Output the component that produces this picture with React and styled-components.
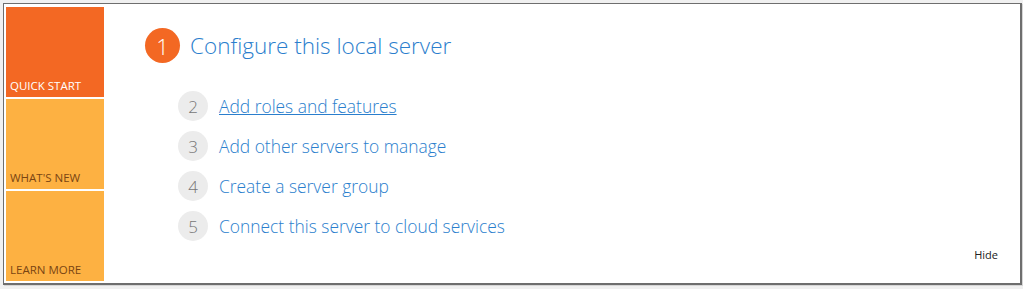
import React from 'react'
import styled, { createGlobalStyle } from 'styled-components'

const GlobalStyle = createGlobalStyle`
  body {
    margin: 0;
    background: #f0f0f0;
    font-family: "Open Sans", "Noto Sans", sans-serif;
  }
`

const steps = [
  { n: 2, label: 'Add roles and features', link: true },
  { n: 3, label: 'Add other servers to manage' },
  { n: 4, label: 'Create a server group' },
  { n: 5, label: 'Connect this server to cloud services' },
]

const tiles = [
  { label: 'QUICK START', active: true },
  { label: "WHAT'S NEW" },
  { label: 'LEARN MORE' },
]

export default function App() {
  return (
    <>
      <GlobalStyle />
      <Page>
        <Panel>
          <Sidebar>
            {tiles.map(t => (
              <Tile key={t.label} active={t.active}>{t.label}</Tile>
            ))}
          </Sidebar>
          <Main>
            <Heading>
              <StepBadge>1</StepBadge>
              <Title>Configure this local server</Title>
            </Heading>
            <Steps>
              {steps.map(s => (
                <Step key={s.n}>
                  <StepNum>{s.n}</StepNum>
                  <StepLink href="#" underline={s.link}>{s.label}</StepLink>
                </Step>
              ))}
            </Steps>
            <Footer>
              <HideBtn>Hide</HideBtn>
            </Footer>
          </Main>
        </Panel>
      </Page>
    </>
  )
}

const Page = styled.div`
  padding: 3px;
`

const Panel = styled.div`
  display: flex;
  height: 274px;
  width: 1012px;
  padding: 3px 2px 2px;
  background: #fff;
  border: 1px solid #6e6e6e;
  border-right-width: 2px;
  border-bottom-width: 2px;
  box-shadow: 1px 1px 0 #d6d6d6;
`

const Sidebar = styled.div`
  display: flex;
  flex-direction: column;
  gap: 2px;
  width: 98px;
  flex-shrink: 0;
`

const Tile = styled.div`
  flex: 1;
  display: flex;
  align-items: flex-end;
  padding: 0 0 4px 4px;
  font-size: 11.5px;
  background: ${p => (p.active ? '#f36823' : '#fdb142')};
  color: ${p => (p.active ? '#fff' : '#7a4513')};
`

const Main = styled.div`
  flex: 1;
  display: flex;
  flex-direction: column;
  padding: 21px 0 0 41px;
`

const Heading = styled.div`
  display: flex;
  align-items: center;
  gap: 10px;
`

const StepBadge = styled.div`
  width: 35px;
  height: 35px;
  border-radius: 50%;
  background: #f36823;
  color: #fff;
  display: flex;
  align-items: center;
  justify-content: center;
  font-size: 22px;
  font-weight: 300;
`

const Title = styled.h1`
  margin: 0;
  font-size: 22.5px;
  font-weight: 300;
  color: #2a7ecd;
`

const Steps = styled.div`
  display: flex;
  flex-direction: column;
  gap: 10px;
  margin-top: 28px;
  padding-left: 33px;
`

const Step = styled.div`
  display: flex;
  align-items: center;
  gap: 11px;
`

const StepNum = styled.div`
  width: 30px;
  height: 30px;
  border-radius: 50%;
  background: #ececec;
  color: #777;
  display: flex;
  align-items: center;
  justify-content: center;
  font-size: 17px;
  font-weight: 300;
`

const StepLink = styled.a`
  font-size: 17.4px;
  font-weight: 300;
  color: #2a7ecd;
  text-decoration: ${p => (p.underline ? 'underline' : 'none')};
`

const Footer = styled.div`
  margin-top: auto;
  display: flex;
  justify-content: flex-end;
  padding: 0 20px 19px 0;
`

const HideBtn = styled.span`
  font-size: 11px;
  color: #222;
`
